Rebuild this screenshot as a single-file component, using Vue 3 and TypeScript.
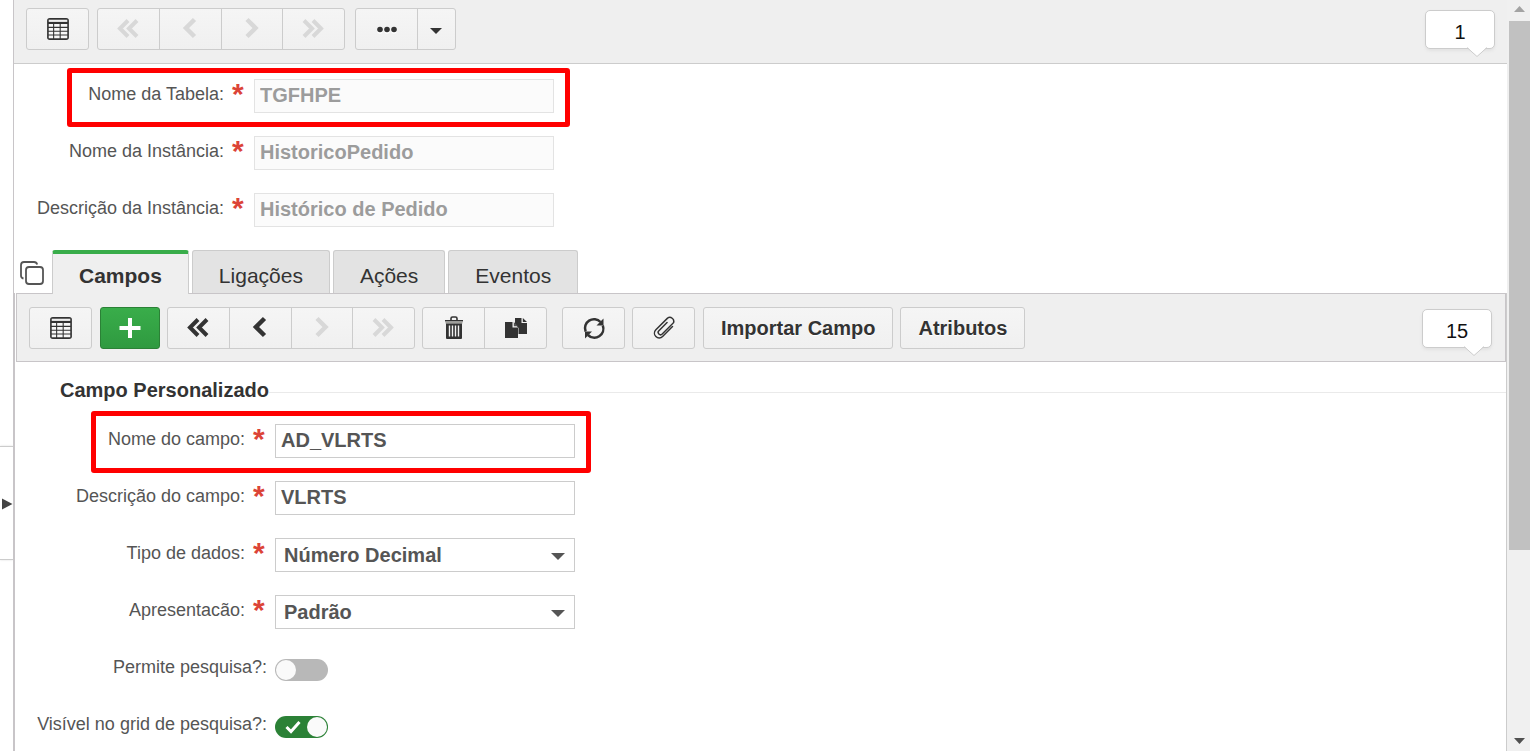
<script setup lang="ts">
import { ref } from 'vue'

interface Tool {
  icon?: string
  text?: string
  label: string
  disabled?: boolean
  kind?: string
}
interface ToolGroup {
  gap: string
  kind?: string
  tools: Tool[]
}

const mainGroups: ToolGroup[] = [
  { gap: 'gap-8', tools: [{ icon: 'grid', label: 'Modo grade' }] },
  {
    gap: 'gap-10',
    kind: 'nav',
    tools: [
      { icon: 'first', label: 'Primeiro', disabled: true },
      { icon: 'prev', label: 'Anterior', disabled: true },
      { icon: 'next', label: 'Próximo', disabled: true },
      { icon: 'last', label: 'Último', disabled: true },
    ],
  },
  {
    gap: 'gap-8',
    tools: [
      { icon: 'dots', label: 'Mais opções' },
      { icon: 'caret', label: 'Abrir menu', kind: 'narrow' },
    ],
  },
]

const fieldGroups: ToolGroup[] = [
  { gap: 'gap-8', tools: [{ icon: 'grid', label: 'Modo grade' }] },
  { gap: 'gap-7', kind: 'primary', tools: [{ icon: 'plus', label: 'Adicionar' }] },
  {
    gap: 'gap-7',
    kind: 'nav',
    tools: [
      { icon: 'first', label: 'Primeiro' },
      { icon: 'prev', label: 'Anterior' },
      { icon: 'next', label: 'Próximo', disabled: true },
      { icon: 'last', label: 'Último', disabled: true },
    ],
  },
  {
    gap: 'gap-15',
    tools: [
      { icon: 'trash', label: 'Excluir' },
      { icon: 'duplicate', label: 'Duplicar' },
    ],
  },
  { gap: 'gap-7', tools: [{ icon: 'refresh', label: 'Atualizar' }] },
  { gap: 'gap-8', tools: [{ icon: 'clip', label: 'Anexos' }] },
  { gap: 'gap-7', tools: [{ text: 'Importar Campo', label: 'Importar Campo', kind: 'wide' }] },
  { gap: 'gap-8', tools: [{ text: 'Atributos', label: 'Atributos', kind: 'wide' }] },
]

const instanceFields = [
  { id: 'tabela', label: 'Nome da Tabela:', value: 'TGFHPE', marked: true },
  { id: 'instancia', label: 'Nome da Instância:', value: 'HistoricoPedido', marked: false },
  { id: 'descricao', label: 'Descrição da Instância:', value: 'Histórico de Pedido', marked: false },
]

const tabs = ['Campos', 'Ligações', 'Ações', 'Eventos']
const activeTab = ref('Campos')

const fieldName = ref('AD_VLRTS')
const fieldDescription = ref('VLRTS')
const dataType = ref('Número Decimal')
const presentation = ref('Padrão')
const searchable = ref(false)
const visibleInGrid = ref(true)
</script>

<template>
  <div class="page">
    <svg class="sprite" aria-hidden="true">
      <symbol id="i-grid" viewBox="1 1 22 22">
        <rect x="2" y="2" width="20" height="20" rx="2.5" fill="#333" />
        <rect x="3.5" y="3.5" width="17" height="2" fill="#eee" />
        <g fill="#f7f7f7">
          <path d="M3.5 7.500h4v2.500h-4zM8.500 7.500h5v2.500h-5zM14.500 7.500h6v2.500h-6zM3.500 11h4v2.500h-4zM8.500 11h5v2.500h-5zM14.500 11h6v2.500h-6zM3.500 14.500h4v2.500h-4zM8.500 14.500h5v2.500h-5zM14.500 14.500h6v2.500h-6zM3.500 18h4v2.500h-4zM8.500 18h5v2.500h-5zM14.500 18h6v2.500h-6z" />
        </g>
      </symbol>
      <symbol id="i-first" viewBox="0 0 24 24">
        <path d="M12 3.500l-8 8 8 8M21 3.500l-8 8 8 8" fill="none" stroke="currentColor" stroke-width="4" />
      </symbol>
      <symbol id="i-prev" viewBox="0 0 24 24">
        <path d="M16.500 2.500 8 11l8.500 8.500" fill="none" stroke="currentColor" stroke-width="4.500" />
      </symbol>
      <symbol id="i-next" viewBox="0 0 24 24">
        <path d="M7 2.500 15.500 11 7 19.500" fill="none" stroke="currentColor" stroke-width="4.500" />
      </symbol>
      <symbol id="i-last" viewBox="0 0 24 24">
        <path d="M2 3.500l8 8-8 8M11 3.500l8 8-8 8" fill="none" stroke="currentColor" stroke-width="4" />
      </symbol>
      <symbol id="i-dots" viewBox="0 0 24 24">
        <g fill="#fff"><circle cx="5" cy="14" r="2.800" /><circle cx="12" cy="14" r="2.800" /><circle cx="19" cy="14" r="2.800" /></g>
        <g fill="currentColor"><circle cx="5" cy="12.500" r="2.800" /><circle cx="12" cy="12.500" r="2.800" /><circle cx="19" cy="12.500" r="2.800" /></g>
      </symbol>
      <symbol id="i-caret" viewBox="0 0 24 24">
        <path d="M5 11h12l-6 6z" fill="currentColor" />
      </symbol>
      <symbol id="i-plus" viewBox="0 0 24 24">
        <path d="M12 2v20M1.500 12h21" fill="none" stroke="#fff" stroke-width="4" />
      </symbol>
      <symbol id="i-trash" viewBox="0 0 24 24">
        <path d="M9 4V2.500q0-1.500 1.500-1.500h3q1.500 0 1.500 1.500V4" fill="none" stroke="#333" stroke-width="1.600" />
        <path d="M3 4h18v1.500H3z" fill="#333" />
        <path d="M3.500 5.500h17v2h-17z" fill="#a0a09c" />
        <path d="M4 7.500h16V22q0 1-1 1H5q-1 0-1-1z" fill="#333" />
        <path d="M7.500 9.500v11M10.500 9.500v11M13.500 9.500v11M16.500 9.500v11" stroke="#f4f4f4" stroke-width="1.400" />
      </symbol>
      <symbol id="i-duplicate" viewBox="0 0 24 24">
        <path d="M11 2h6.500v5H23v11h-8.500v-6L11 8z" fill="#333" />
        <path d="M18.800 2 23 6h-4.200z" fill="#333" />
        <path d="M1 6h7.500v5.500h5.500V22H1z" fill="#333" />
        <path d="M9.800 6l4.200 4.300H9.800z" fill="#555" />
      </symbol>
      <symbol id="i-refresh" viewBox="0 0 24 24">
        <path d="M3.600 15.500A9 9 0 0 1 18.500 6M20.800 9.500A9 9 0 0 1 6 19" fill="none" stroke="#333" stroke-width="2.500" />
        <path d="M21.500 2.500v7h-7z" fill="#333" />
        <path d="M3 22.500v-7h7z" fill="#333" />
      </symbol>
      <symbol id="i-clip" viewBox="0 0 24 24">
        <path d="M17 5v14a4.500 4.500 0 0 1-9.500 0V2.500a4 4 0 0 1 7.500-1V17.500a2.300 2.300 0 0 1-4.700 0V6" transform="rotate(45 12 12)" fill="none" stroke="#333" stroke-width="1.500" stroke-linecap="round" />
      </symbol>
      <symbol id="i-copy" viewBox="0 0 26 26">
        <rect x="7" y="7" width="17" height="17" rx="3" fill="none" stroke="#555" stroke-width="1.800" />
        <path d="M4.500 18.500Q2 18 2 15.500V5q0-3 3-3h10q2.500 0 3.200 2.500" fill="none" stroke="#555" stroke-width="1.800" />
      </symbol>
    </svg>

    <aside class="rail">
      <button class="handle" type="button" aria-label="Expandir painel">
        <svg viewBox="0 0 12 12" aria-hidden="true"><path d="M1 0.500 11.500 6 1 11.500z" fill="#444" /></svg>
      </button>
    </aside>

    <main class="main">
      <section class="upper">
        <div class="toolbar toolbar-main" role="toolbar" aria-label="Instância">
          <div v-for="(group, g) in mainGroups" :key="g" class="group" :class="[group.gap, group.kind]">
            <button
              v-for="tool in group.tools"
              :key="tool.label"
              type="button"
              class="tool"
              :class="tool.kind"
              :disabled="tool.disabled"
              :aria-label="tool.label"
            >
              <svg aria-hidden="true"><use :href="'#i-' + tool.icon" /></svg>
            </button>
          </div>
          <div class="counter">
            1
            <svg viewBox="0 0 20 10" aria-hidden="true"><path d="M0 0h20L10 9.500z" fill="#fff" /><path d="M0 .5 10 9.500 20 .5" fill="none" stroke="#ccc" /></svg>
          </div>
        </div>

        <form class="form form-instance" @submit.prevent>
          <div v-for="field in instanceFields" :key="field.id" class="field">
            <label :for="field.id">{{ field.label }}<span class="required">*</span></label>
            <input :id="field.id" type="text" :value="field.value" disabled />
            <span v-if="field.marked" class="mark mark-instance"></span>
          </div>
        </form>

        <div class="tabs" role="tablist">
          <button class="copy" type="button" aria-label="Copiar">
            <svg aria-hidden="true"><use href="#i-copy" /></svg>
          </button>
          <button
            v-for="tab in tabs"
            :key="tab"
            type="button"
            role="tab"
            class="tab"
            :class="{ active: tab === activeTab }"
            :aria-selected="tab === activeTab"
            @click="activeTab = tab"
          >
            {{ tab }}
          </button>
        </div>
      </section>

      <section class="lower">
        <div class="toolbar toolbar-fields" role="toolbar" aria-label="Campos">
          <div v-for="(group, g) in fieldGroups" :key="g" class="group" :class="[group.gap, group.kind]">
            <button
              v-for="tool in group.tools"
              :key="tool.label"
              type="button"
              class="tool"
              :class="tool.kind"
              :disabled="tool.disabled"
              :aria-label="tool.label"
            >
              <svg v-if="tool.icon" aria-hidden="true"><use :href="'#i-' + tool.icon" /></svg>
              <template v-else>{{ tool.text }}</template>
            </button>
          </div>
          <div class="counter">
            15
            <svg viewBox="0 0 20 10" aria-hidden="true"><path d="M0 0h20L10 9.500z" fill="#fff" /><path d="M0 .5 10 9.500 20 .5" fill="none" stroke="#ccc" /></svg>
          </div>
        </div>

        <h2 class="heading">Campo Personalizado</h2>

        <form class="form form-field" @submit.prevent>
          <div class="field">
            <label for="nome">Nome do campo:<span class="required">*</span></label>
            <input id="nome" v-model="fieldName" type="text" />
            <span class="mark mark-field"></span>
          </div>
          <div class="field">
            <label for="desc">Descrição do campo:<span class="required">*</span></label>
            <input id="desc" v-model="fieldDescription" type="text" />
          </div>
          <div class="field">
            <label for="tipo">Tipo de dados:<span class="required">*</span></label>
            <span class="select">
              <select id="tipo" v-model="dataType"><option>Número Decimal</option></select>
              <svg viewBox="0 0 14 7" aria-hidden="true"><path d="M0 0h14L7 7z" fill="#555" /></svg>
            </span>
          </div>
          <div class="field">
            <label for="apres">Apresentacão:<span class="required">*</span></label>
            <span class="select">
              <select id="apres" v-model="presentation"><option>Padrão</option></select>
              <svg viewBox="0 0 14 7" aria-hidden="true"><path d="M0 0h14L7 7z" fill="#555" /></svg>
            </span>
          </div>
          <div class="field">
            <label for="pesquisa">Permite pesquisa?:</label>
            <span class="switch"><input id="pesquisa" v-model="searchable" type="checkbox" /></span>
          </div>
          <div class="field">
            <label for="visivel">Visível no grid de pesquisa?:</label>
            <span class="switch">
              <input id="visivel" v-model="visibleInGrid" type="checkbox" />
              <svg v-if="visibleInGrid" viewBox="0 0 16 14" aria-hidden="true"><path d="M1.500 7l4.500 4.500L14.500 2" fill="none" stroke="#fff" stroke-width="3" /></svg>
            </span>
          </div>
        </form>
      </section>
    </main>

    <div class="scroll" aria-hidden="true">
      <svg viewBox="0 0 21 21"><path d="M5 12h11l-5.500-6z" fill="#a3a3a3" /></svg>
      <div class="track"><div class="thumb"></div></div>
      <svg viewBox="0 0 21 21"><path d="M5 8h11l-5.500 6z" fill="#505050" /></svg>
    </div>
  </div>
</template>

<style>
body {
  margin: 0;
  overflow: hidden;
}
</style>

<style scoped>
.page {
  display: flex;
  height: 100vh;
  overflow: hidden;
  background: #fff;
  color: #333;
  font-family: "Liberation Sans", Arial, sans-serif;
  font-size: 20px;
}
.page *,
.page *::before,
.page *::after {
  box-sizing: border-box;
}
button,
input,
select {
  margin: 0;
  font-family: inherit;
  font-size: 20px;
  font-weight: bold;
  color: inherit;
}
.sprite {
  position: absolute;
  width: 0;
  height: 0;
}
.rail {
  flex: 0 0 13px;
  padding-top: 446px;
}
.handle {
  display: flex;
  align-items: center;
  justify-content: flex-end;
  width: 100%;
  height: 114px;
  padding: 2px 0 0;
  border: solid #ccc;
  border-width: 1px 0;
  background: #fff;
  box-shadow: 0 0 2px #ddd;
}
.handle svg {
  width: 12px;
  height: 12px;
}
.main {
  display: flex;
  flex: 1;
  flex-direction: column;
  min-width: 0;
}
.upper {
  border-left: 1px solid #c8c5c8;
}
.lower {
  flex: 1;
  border-left: 2px solid #c8c5c8;
  border-right: 1px solid #ccc;
}
.toolbar {
  display: flex;
  align-items: center;
  background: #efefef;
}
.toolbar-main {
  padding: 8px 12px 13px;
  border-bottom: 1px solid #ccc;
}
.toolbar-fields {
  margin-left: 1px;
  padding: 13px 13px 12px 12px;
  border: 1px solid #c8c5c8;
}
.group {
  display: flex;
  height: 42px;
  border: 1px solid #ccc;
  border-radius: 3px;
  background: linear-gradient(#f5f5f5, #f0f0f0);
}
.gap-7 {
  margin-right: 7px;
}
.gap-8 {
  margin-right: 8px;
}
.gap-10 {
  margin-right: 10px;
}
.gap-15 {
  margin-right: 15px;
}
.tool {
  display: flex;
  align-items: center;
  justify-content: center;
  width: 61px;
  padding: 0;
  border: 0;
  background: none;
  color: #333;
  text-shadow: 0 1px 0 #fff;
}
.tool + .tool {
  width: 62px;
  border-left: 1px solid #ccc;
}
.tool:disabled {
  color: #d8d8d8;
}
.tool svg {
  width: 24px;
  height: 24px;
}
.nav {
  width: 248px;
}
.nav .tool {
  flex: 1;
}
.tool + .tool.narrow {
  width: 38px;
}
.tool.wide {
  width: auto;
  padding: 0 17px;
}
.primary {
  border-color: #2b8136;
  background: linear-gradient(#39ad4a, #2f9a40);
}
.primary .tool {
  width: 58px;
}
.counter {
  position: relative;
  width: 70px;
  height: 39px;
  margin-left: auto;
  padding-top: 5px;
  border: 1px solid #ccc;
  border-radius: 5px;
  background: #fff;
  box-shadow: 0 2px 3px #e2e2e2;
  color: #111;
  line-height: 33px;
  text-align: center;
}
.counter svg {
  position: absolute;
  right: 7px;
  bottom: -9px;
  width: 20px;
  height: 10px;
}
.form {
  display: flex;
  flex-direction: column;
  gap: 23px;
}
.form-instance {
  padding: 15px 0 23px;
}
.form-field {
  padding-top: 22px;
}
.field {
  position: relative;
  display: flex;
  gap: 8px;
  height: 34px;
}
.field label {
  display: flex;
  gap: 8px;
  justify-content: flex-end;
  width: 232px;
  color: #555;
  font-size: 18px;
  line-height: 30px;
  white-space: nowrap;
}
.form-field .field label {
  width: 252px;
}
.required {
  width: 14px;
  color: #dc4437;
  font-size: 30px;
  font-weight: bold;
  line-height: 30px;
}
.field input[type="text"] {
  width: 300px;
  height: 34px;
  padding: 0 5px 2px;
  border: 1px solid #ccc;
  border-radius: 0;
  background: #fff;
  color: #555;
}
.field input[type="text"]:disabled {
  border-color: #e3e3e3;
  background: #fbfbfb;
  color: #9c9c9c;
}
.mark {
  position: absolute;
  border: 5px solid #f00;
  border-radius: 3px;
  pointer-events: none;
}
.mark-instance {
  top: -11px;
  left: 53px;
  width: 503px;
  height: 59px;
}
.mark-field {
  top: -13px;
  left: 76px;
  width: 500px;
  height: 62px;
}
.tabs {
  display: flex;
  gap: 3px;
  height: 43px;
}
.copy {
  display: flex;
  width: 35px;
  padding: 10px 0 0 5px;
  border: 0;
  background: none;
}
.copy svg {
  width: 26px;
  height: 26px;
}
.tab {
  height: 43px;
  padding: 8px 26px 0;
  border: 1px solid #ccc;
  border-bottom: 0;
  border-radius: 3px 3px 0 0;
  background: #e3e3e3;
  font-size: 21px;
  font-weight: normal;
}
.tab.active {
  position: relative;
  height: 44px;
  padding-top: 4px;
  border-top: 4px solid #39ad4a;
  background: #efefef;
  font-weight: bold;
}
.heading {
  display: flex;
  align-items: center;
  margin: 0;
  padding: 16px 0 0 45px;
  font-size: 20px;
  line-height: 24px;
}
.heading::after {
  flex: 1;
  height: 1px;
  margin-top: 4px;
  background: #eaeaea;
  content: "";
}
.select {
  position: relative;
  width: 300px;
}
.select select {
  width: 100%;
  height: 34px;
  padding: 0 30px 0 8px;
  border: 1px solid #ccc;
  border-radius: 0;
  appearance: none;
  background: #fff;
  color: #555;
}
.select svg {
  position: absolute;
  top: 15px;
  right: 10px;
  width: 14px;
  height: 7px;
  pointer-events: none;
}
.switch {
  position: relative;
  display: flex;
  align-items: center;
  padding-top: 2px;
}
.switch input {
  display: flex;
  align-items: center;
  width: 53px;
  height: 22px;
  padding: 0 1px;
  border-radius: 11px;
  appearance: none;
  background: #b8b8b8;
}
.switch input::before {
  width: 20px;
  height: 20px;
  border-radius: 50%;
  background: #fafafa;
  content: "";
}
.switch input:checked {
  justify-content: flex-end;
  background: #2b8136;
}
.switch svg {
  position: absolute;
  top: 11px;
  left: 10px;
  width: 16px;
  height: 14px;
  pointer-events: none;
}
.scroll {
  display: flex;
  flex: 0 0 23px;
  flex-direction: column;
  padding-left: 2px;
  background: #f0f0f0;
}
.scroll svg {
  flex: 0 0 21px;
  width: 21px;
}
.track {
  flex: 1;
}
.thumb {
  height: 74.6%;
  background: #c1c1c1;
}
</style>
